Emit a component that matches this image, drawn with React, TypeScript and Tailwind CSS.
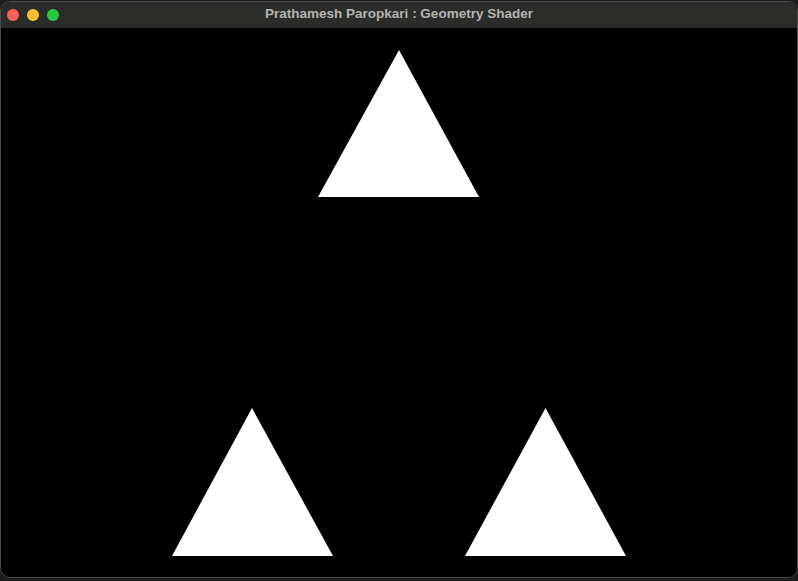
export default function App() {
  return (
    <div className="relative h-[581px] w-[798px] overflow-hidden bg-[#1c1c1c]">
      <div className="mt-px flex h-[577px] flex-col overflow-hidden rounded-[10px] border border-[#4a4a4a] bg-black">
        <div className="relative flex h-[26px] shrink-0 items-center bg-[#2b2b29] px-[6px]">
          <div className="flex gap-[8px]">
            <span className="h-[12px] w-[12px] rounded-full bg-[#fe5f57]" />
            <span className="h-[12px] w-[12px] rounded-full bg-[#febc2e]" />
            <span className="h-[12px] w-[12px] rounded-full bg-[#28c840]" />
          </div>
          <div
            className="absolute inset-0 flex items-center justify-center pb-px text-[13.5px] font-bold text-[#b3b3b1]"
            style={{ fontFamily: '"Liberation Sans", Arial, sans-serif' }}
          >
            Prathamesh Paropkari : Geometry Shader
          </div>
        </div>
        <div className="flex-1 bg-black">
          <svg width="796" height="549" viewBox="1 28 796 549" className="block">
            <polygon points="399,50 318,197 479,197" fill="#fff" />
            <polygon points="252,408 172,556 333,556" fill="#fff" />
            <polygon points="545.5,408 465,556 626,556" fill="#fff" />
          </svg>
        </div>
      </div>
    </div>
  )
}
